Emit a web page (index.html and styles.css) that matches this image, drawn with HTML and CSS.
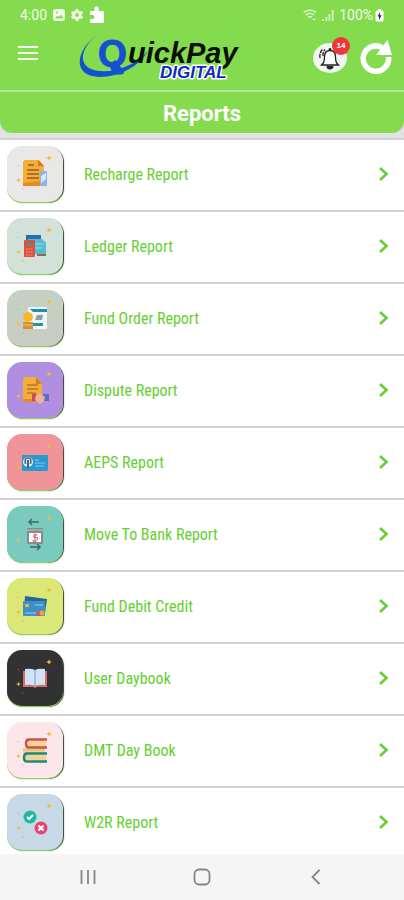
FILE: index.html
```
<!DOCTYPE html>
<html lang="en">
<head>
<meta charset="utf-8">
<meta name="viewport" content="width=device-width, initial-scale=1">
<title>Reports</title>
<link rel="stylesheet" href="styles.css">
</head>
<body>
<svg class="defs" aria-hidden="true">
  <symbol id="chevron" viewBox="0 0 12 16"><path d="M2 2l6.500 6L2 14" fill="none" stroke="currentColor" stroke-width="2.600"/></symbol>
  <symbol id="sparks" viewBox="0 0 56 56">
    <path d="M42 9.500l1 1.700 2 .8-2 .8-1 1.700-1-1.700-2-.8 2-.8zM11.500 32l.8 1.500 1.700.5-1.700.7-.8 1.600-.8-1.600-1.700-.7 1.700-.5z" fill="#f5b93a"/>
    <path d="M10.500 19.500h1.500M15 43h1.500" stroke="#8a9a94" stroke-opacity=".5"/>
  </symbol>
</svg>

<div class="top">
  <div class="status">
    <div class="status-side">
      <span class="clock">4:00</span>
      <svg class="s-gallery" width="12" height="12" viewBox="0 0 12 12"><rect width="12" height="12" rx="3" fill="#f4fbec"/><path d="M2 9.500l2.500-3L6 8l2-2.500 2.500 4z" fill="#84db4e"/><circle cx="4" cy="3.500" r="1" fill="#84db4e"/></svg>
      <svg width="12" height="12" viewBox="0 0 12 12"><path d="M4.800 0h2.400l.4 1.700 1.500.8L10.800 2 12 4l-1.300 1.300v1.500L12 8l-1.200 2-1.700-.5-1.500.8L7.200 12H4.800l-.4-1.700-1.500-.8L1.200 10 0 8l1.300-1.200V5.300L0 4l1.200-2 1.700.5 1.500-.8z" fill="#f4fbec"/><circle cx="6" cy="6" r="2" fill="#84db4e"/></svg>
      <svg width="16" height="18" viewBox="0 0 16 18"><path d="M1 5h5C4.500 2 5.500.5 7.500.5S10.500 2 9.500 5H15v12H1v-4c3 .8 4.500-.5 4.500-2S4 8.200 1 9z" fill="#fff"/></svg>
    </div>
    <div class="status-side status-right">
      <svg width="14" height="12" viewBox="0 0 14 12" fill="none" stroke="#eefae4" stroke-width="1.400"><path d="M.7 3.500Q7-1.200 13.300 3.500M2.800 6Q7 2.700 11.200 6M5 8.300Q7 6.800 9 8.300"/><path d="M9.500 9.500l1.500 1.500 1.500-1.500" stroke-width="1"/></svg>
      <svg width="12" height="12" viewBox="0 0 12 12" fill="#eefae4"><path d="M0 10h2v2H0zM3.500 8h1.800v4H3.500zM6.500 5h1.800v7H6.500zM9.700 1h2v11h-2z" opacity=".75"/></svg>
      <span class="battery">100%</span>
      <svg width="9" height="13" viewBox="0 0 9 13"><path d="M3 0h3v1.500h1A1.500 1.500 0 0 1 8.500 3v8A1.500 1.500 0 0 1 7 12.500H2A1.500 1.500 0 0 1 .5 11V3A1.500 1.500 0 0 1 2 1.500h1z" fill="#fff"/><path d="M5 3L2.500 7.500H4L4 11l2.700-4.700H5z" fill="#333"/></svg>
    </div>
  </div>

  <header class="bar">
    <button class="icon-btn menu" aria-label="Menu">
      <svg width="20" height="14" viewBox="0 0 20 14"><path d="M0 1h20M0 7h20M0 13h20" stroke="#f8fdf3" stroke-width="2"/></svg>
    </button>
    <svg class="logo" width="166" height="48" viewBox="0 0 166 48" role="img" aria-label="QuickPay Digital">
      <path d="M18 3C5 12-3 28 5 38c10 12 50 6 65-20C54 36 26 43 11 35 0 28 5 13 18 3z" fill="#1450d2"/>
      <text class="logo-q" x="20" y="33">Q</text>
      <path d="M36 28q4 8 10 11" fill="none" stroke="#1450d2" stroke-width="4"/>
      <text class="logo-name" x="50" y="30">uickPay</text>
      <text class="logo-sub" x="82" y="45">DIGITAL</text>
    </svg>
    <div class="actions">
      <button class="icon-btn bell" aria-label="Notifications">
        <svg width="34" height="32" viewBox="0 0 34 32"><ellipse cx="17" cy="17" rx="17" ry="15" fill="#f3f5f2"/><path d="M8.500 24c2-2 3-3 3-8 0-4 2-6.500 5.500-6.500s5.500 2.500 5.500 6.500c0 5 1 6 3 8z" fill="#fff" stroke="#222" stroke-width="1.300"/><circle cx="17" cy="8.500" r="1.400" fill="#222"/><path d="M13.500 25a3.500 3.500 0 0 0 7 0z" fill="#222"/><path d="M7 17c-.6-4 .5-7 3-9M10 15c-.2-3 .5-5 2-6.500" fill="none" stroke="#222" stroke-width="1.300" stroke-dasharray="4 1"/></svg>
        <span class="badge">14</span>
      </button>
      <button class="icon-btn" aria-label="Refresh">
        <svg width="32" height="34" viewBox="0 0 32 34"><path d="M22 7.500A12.700 12.700 0 1 0 28.500 17" fill="none" stroke="#fff" stroke-width="5.500"/><path d="M27.500 0L32 15H16z" fill="#fff"/></svg>
      </button>
    </div>
  </header>
</div>

<div class="title-wrap"><h1 class="title">Reports</h1></div>

<main class="list">
  <a class="row" href="#recharge"><svg class="tile t-recharge" viewBox="0 0 56 56"><use href="#sparks"/><path d="M18 14h14l5 6v17H16V16z" fill="#f5ad35"/><path d="M16 37v3h18v-5z" fill="#e28c20"/><path d="M31 14v6h6z" fill="#ce7c20"/><path d="M21 19h6M20 24h12M20 28h12M20 32h12" stroke="#985b2c" stroke-width="1.500"/><rect x="33" y="25" width="7" height="15" rx="1" fill="#8db4ee"/><path d="M34 30l5-3v6l-5 4z" fill="#d7e7fc"/></svg><span class="label">Recharge Report</span><svg class="chev"><use href="#chevron"/></svg></a>
  <a class="row" href="#ledger"><svg class="tile t-ledger" viewBox="0 0 56 56"><use href="#sparks"/><path d="M19 17h15v9H19z" fill="#246fac"/><path d="M21 21h14l4 4v11H21z" fill="#55bdd1"/><path d="M28 26h8M28 30h7" stroke="#9be1e4"/><rect x="17" y="22" width="11" height="17" rx="1" fill="#de5139"/><path d="M19 25h7v3h-7z" fill="#5c8791"/><path d="M19 31h7M19 34h7M19 37h7" stroke="#f69c78" stroke-dasharray="1.500 1"/><path d="M30 37h9" stroke="#9c6344" stroke-width="2"/></svg><span class="label">Ledger Report</span><svg class="chev"><use href="#chevron"/></svg></a>
  <a class="row" href="#order"><svg class="tile t-order" viewBox="0 0 56 56"><use href="#sparks"/><path d="M21 17h19v22H21z" fill="#eff6f7"/><path d="M23 19h17v3H26z" fill="#268cac"/><path d="M30 25h6l-1 5h-7z" fill="#909eab"/><path d="M26 33h10v3H26z" fill="#2793a5"/><circle cx="21" cy="27" r="5" fill="#f7b72d"/><path d="M16 32h10v7H16z" fill="#d79032"/><path d="M16 35h10" stroke="#f4c75a"/></svg><span class="label">Fund Order Report</span><svg class="chev"><use href="#chevron"/></svg></a>
  <a class="row" href="#dispute"><svg class="tile t-dispute" viewBox="0 0 56 56"><use href="#sparks"/><path d="M18 15h11l6 6v17H16V17z" fill="#f5ad35"/><path d="M29 15v7h6z" fill="#cf7d29"/><path d="M16 37h18v3H16z" fill="#df8f2a"/><path d="M20 23h11M20 27h11M20 31h9" stroke="#b9762c" stroke-width="1.500"/><path d="M25 32h5v7h-5z" fill="#ce4663"/><path d="M36 32h6v7h-6z" fill="#5870bb"/><path d="M29 33l5-1 4 3-1 4-4 3-5-4z" fill="#efb393"/></svg><span class="label">Dispute Report</span><svg class="chev"><use href="#chevron"/></svg></a>
  <a class="row" href="#aeps"><svg class="tile t-aeps" viewBox="0 0 56 56"><use href="#sparks"/><rect x="15" y="21" width="26" height="16" rx="1" fill="#2b98d3"/><circle cx="21" cy="28" r="5" fill="#e7eff5"/><path d="M18.500 30c-1-5 0-6 2.500-6s3.500 1 2.500 6" stroke="#476278" stroke-width="1.500" fill="none"/><path d="M21 26v8" stroke="#476278" stroke-width="2"/><path d="M28 26h4M28 29h10M28 32h9" stroke="#83cbed"/></svg><span class="label">AEPS Report</span><svg class="chev"><use href="#chevron"/></svg></a>
  <a class="row" href="#bank"><svg class="tile t-bank" viewBox="0 0 56 56"><use href="#sparks"/><path d="M32 16H22m3-3l-3 3 3 3M23 41h10m-3-3l3 3-3 3" fill="none" stroke="#456a66" stroke-width="1.500"/><path d="M20 22h16v16H20z" fill="#81908e"/><path d="M20 24h16" stroke="#b8c4c2"/><path d="M22 27h12v9H22z" fill="#fff"/><path d="M30.500 29q-4-1-4 1t3 1.500 0 3-3.500-.5M28 27.500v8" fill="none" stroke="#d94b54"/></svg><span class="label">Move To Bank Report</span><svg class="chev"><use href="#chevron"/></svg></a>
  <a class="row" href="#debit"><svg class="tile t-debit" viewBox="0 0 56 56"><use href="#sparks"/><path d="M18 18l22 3-2 14-21-2z" fill="#25699b"/><rect x="16" y="23" width="22" height="15" rx="1" fill="#3c91cd"/><path d="M18 26h4v3h-4z" fill="#f5ae45"/><path d="M18 35h11M28 27h8" stroke="#a0d0ed"/><circle cx="32" cy="35" r="2.500" fill="#e44b4b"/><circle cx="35" cy="35" r="2.500" fill="#f39e43"/></svg><span class="label">Fund Debit Credit</span><svg class="chev"><use href="#chevron"/></svg></a>
  <a class="row" href="#daybook"><svg class="tile t-daybook" viewBox="0 0 56 56"><use href="#sparks"/><path d="M16 21h24v16H30l-2 1-2-1H16z" fill="#d56e68"/><path d="M18 19q6-1 10 1v16q-4-2-10-1zM38 19q-6-1-10 1v16q4-2 10-1z" fill="#cfe4fb"/><path d="M28 20v16" stroke="#8098b5"/></svg><span class="label">User Daybook</span><svg class="chev"><use href="#chevron"/></svg></a>
  <a class="row" href="#dmt"><svg class="tile t-dmt" viewBox="0 0 56 56"><use href="#sparks"/><path d="M21 19h18v6H21zM16 26h22v5H16zM19 33h20v5H19z" fill="#f2d395"/><path d="M40 17.500H22q-3 0-3 4t3 4h18" fill="none" stroke="#c65345" stroke-width="2.500"/><path d="M16 28h22" stroke="#d8b77d"/><path d="M40 31.500H20q-3 0-3 4t3 4h20" fill="none" stroke="#1b8b76" stroke-width="2.500"/></svg><span class="label">DMT Day Book</span><svg class="chev"><use href="#chevron"/></svg></a>
  <a class="row" href="#w2r"><svg class="tile t-w2r" viewBox="0 0 56 56"><use href="#sparks"/><circle cx="23" cy="23" r="6.500" fill="#1fb7a0"/><path d="M20 23l2 2 4-4" stroke="#fff" stroke-width="2" fill="none"/><circle cx="34" cy="34" r="6.500" fill="#e94370"/><path d="M31.500 31.500l5 5m0-5l-5 5" stroke="#fff" stroke-width="2.200"/></svg><span class="label">W2R Report</span><svg class="chev"><use href="#chevron"/></svg></a>
</main>

<nav class="nav">
  <button class="icon-btn" aria-label="Recent apps"><svg width="16" height="16" viewBox="0 0 16 16"><path d="M1.500 1v14M8 1v14M14.500 1v14" stroke="#858585" stroke-width="1.800"/></svg></button>
  <button class="icon-btn" aria-label="Home"><svg width="18" height="18" viewBox="0 0 18 18"><rect x="1.500" y="1.500" width="15" height="15" rx="4.500" fill="none" stroke="#858585" stroke-width="1.800"/></svg></button>
  <button class="icon-btn" aria-label="Back"><svg width="16" height="16" viewBox="0 0 16 16"><path d="M11.500 1L4.500 8l7 7" fill="none" stroke="#858585" stroke-width="1.800"/></svg></button>
</nav>
</body>
</html>
```
FILE: styles.css
```
* { box-sizing: border-box; }
body {
  margin: 0;
  height: 100vh;
  display: flex;
  flex-direction: column;
  background: #fff;
  font-family: Roboto, "Liberation Sans", sans-serif;
}
.defs { display: none; }
svg { display: block; flex: none; }
.icon-btn {
  display: block;
  padding: 0;
  border: 0;
  background: none;
  cursor: pointer;
}

.top {
  flex: none;
  background: #84db4e;
  border-bottom: 2px solid #b5e997;
}
.status {
  display: flex;
  justify-content: space-between;
  height: 30px;
  padding: 0 20px;
  color: #effae6;
  font-size: 14px;
  line-height: 16px;
}
.status-side { display: flex; align-items: center; gap: 6px; }
.status-right { gap: 5px; }
.battery { margin-right: -3px; }
.bar {
  display: flex;
  align-items: center;
  height: 60px;
  padding: 0 12px 6px 18px;
}
.menu { padding-bottom: 8px; }
.logo { margin-left: 40px; overflow: visible; }
.logo text { font-family: "Liberation Sans", Arial, sans-serif; font-weight: 700; font-style: italic; }
.logo .logo-q { font-size: 37px; font-style: normal; fill: #1450d2; stroke: #1450d2; stroke-width: 1px; }
.logo .logo-name { font-size: 29px; fill: #0a0f08; }
.logo .logo-sub { font-size: 17px; fill: #1428c8; stroke: #fff; stroke-width: 3px; stroke-linejoin: round; paint-order: stroke; }
.actions { display: flex; align-items: center; gap: 13px; margin-left: auto; }
.bell { position: relative; }
.badge {
  position: absolute;
  top: -4px;
  right: -3px;
  width: 18px;
  height: 18px;
  border-radius: 50%;
  background: #ef363c;
  color: #fff;
  font-size: 8px;
  font-weight: 700;
  line-height: 18px;
  text-align: center;
}

.title-wrap { flex: none; padding-bottom: 5px; background: #e2e2e4; }
.title {
  margin: 0;
  padding: 8px 0 5px;
  border-radius: 0 0 12px 12px;
  background: #84db4e;
  color: #fff;
  font-size: 22px;
  font-weight: 700;
  line-height: 28px;
  text-align: center;
}

.list { flex: 1; min-height: 0; overflow-y: auto; scrollbar-width: none; }
.row {
  display: flex;
  align-items: center;
  height: 72px;
  padding: 0 14px 2px 7px;
  border-top: 2px solid #d2d2d2;
  color: #65d02f;
  text-decoration: none;
}
.label {
  flex: 1;
  margin-left: 21px;
  padding-top: 2px;
  font-family: "Roboto Condensed", "Liberation Sans Narrow", Roboto, sans-serif;
  font-size: 16px;
  font-weight: 400;
  line-height: 20px;
}
.chev { width: 12px; height: 16px; color: #65d02f; }
.tile {
  width: 56px;
  height: 56px;
  border-radius: 15px;
  box-shadow: 0 1px 0 #8bd45e, 1px 1px 1px #303a2b;
}
.t-recharge { background: #e9e8e6; }
.t-ledger { background: #d2e2d9; }
.t-order { background: linear-gradient(#c4d1c1, #c9ccc5); }
.t-dispute { background: #b08fe0; }
.t-aeps { background: #f0949a; }
.t-bank { background: #7acabd; }
.t-debit { background: #dbe878; }
.t-daybook { background: #323233; }
.t-dmt { background: #fde6e9; }
.t-w2r { background: #c7d9e7; }

.nav {
  flex: none;
  display: flex;
  justify-content: center;
  align-items: center;
  gap: 97px;
  height: 46px;
  background: #f5f5f5;
}
```
